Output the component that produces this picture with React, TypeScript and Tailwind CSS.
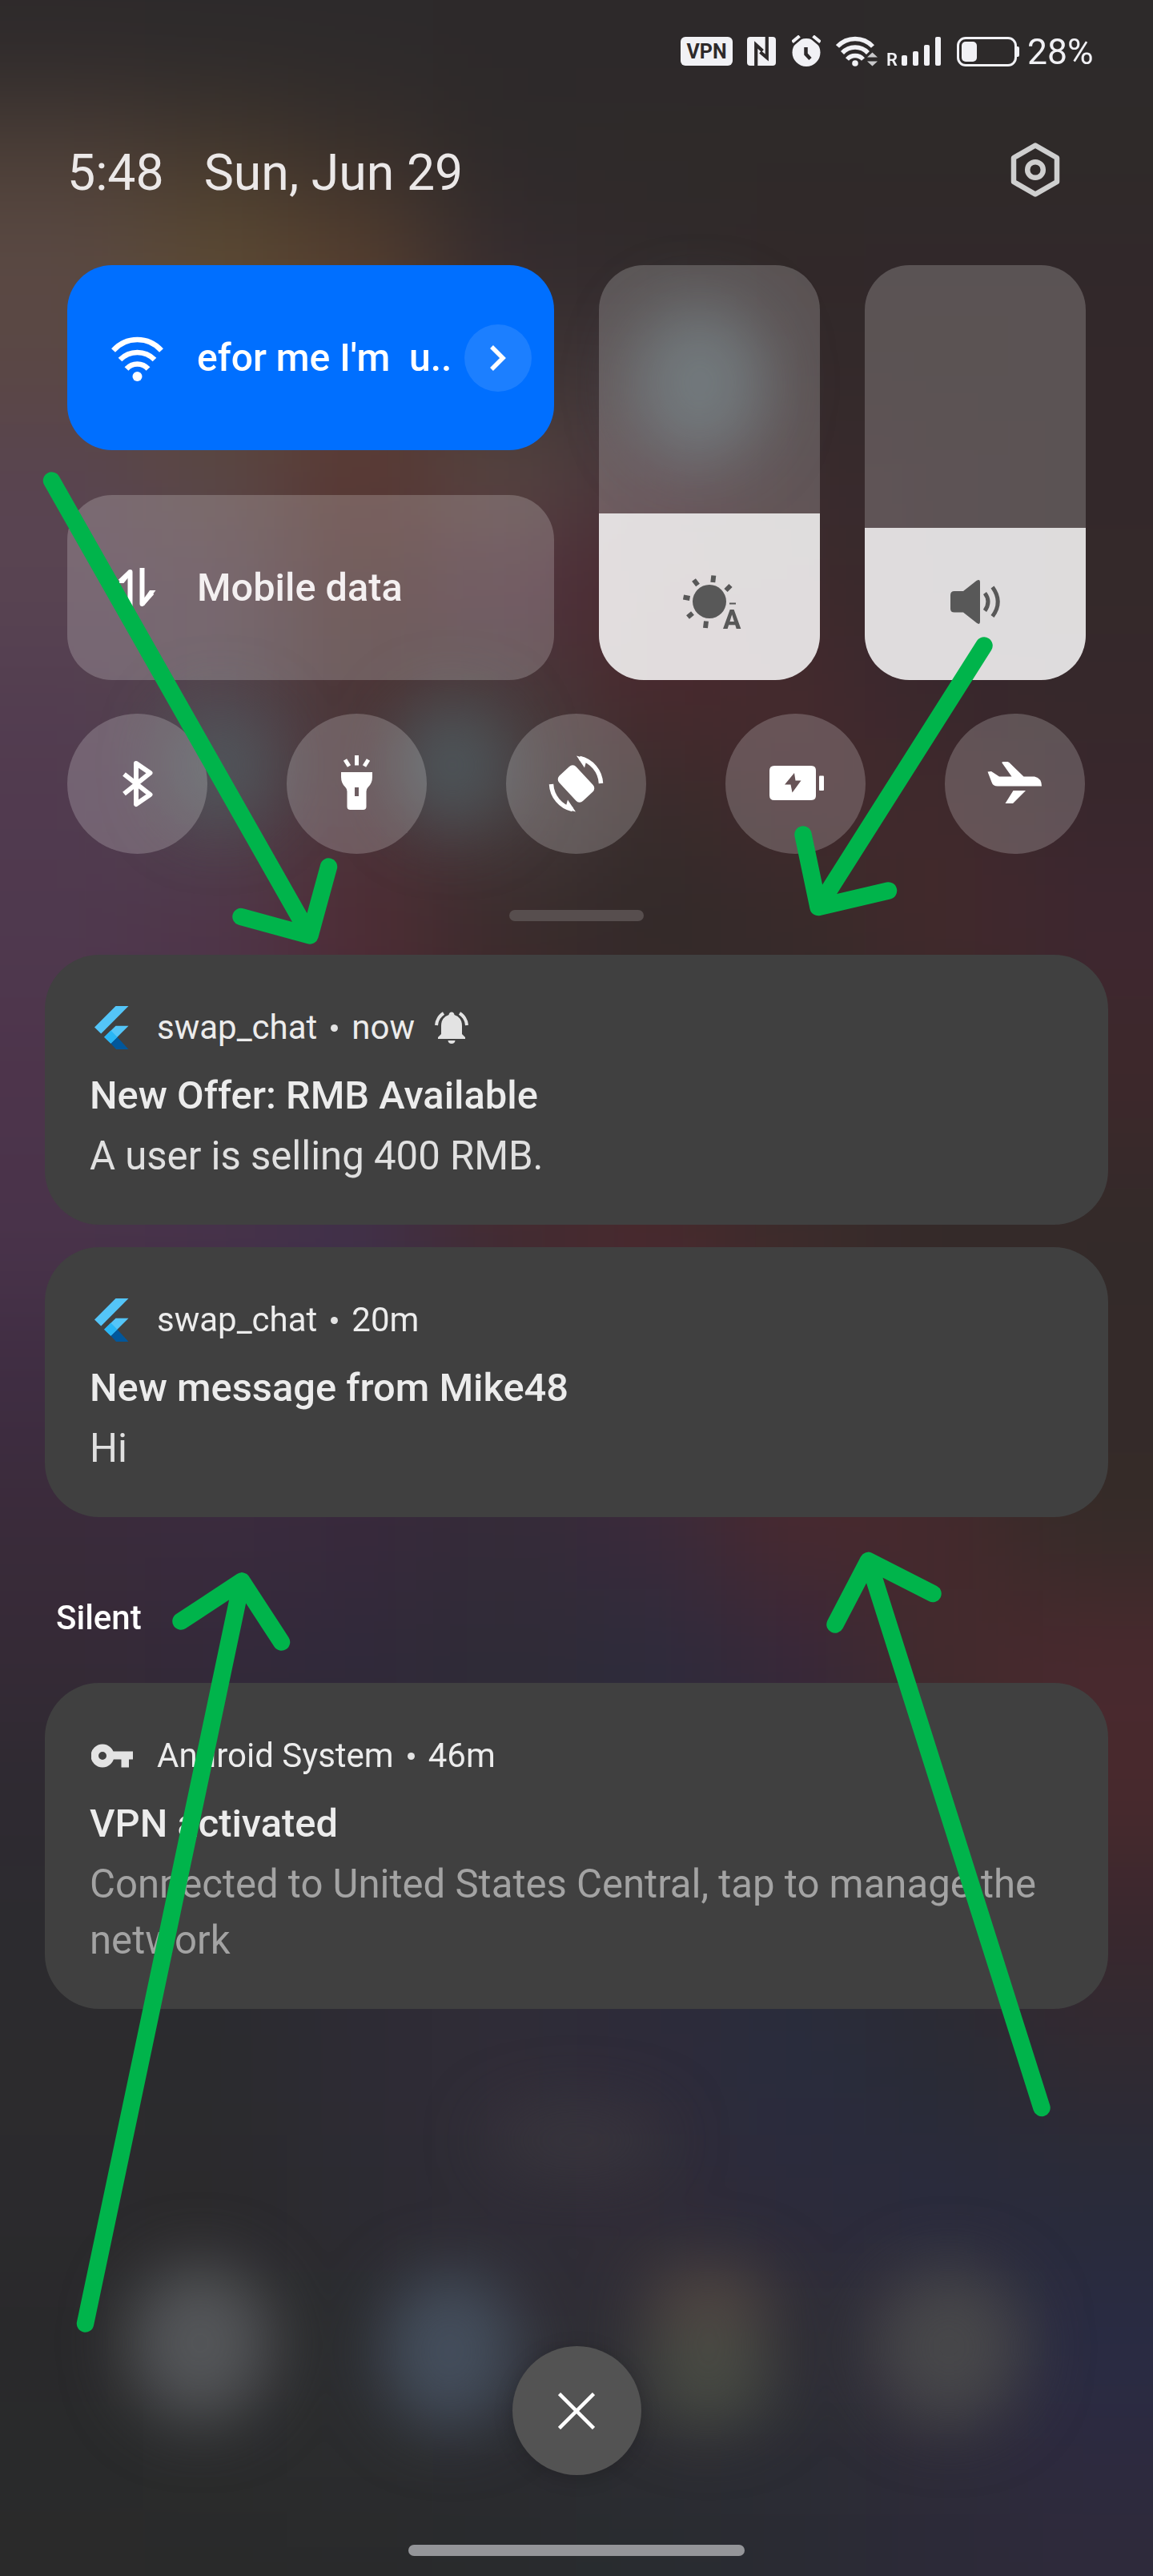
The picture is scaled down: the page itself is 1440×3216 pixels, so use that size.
import type { ReactNode } from "react";

/* Wallpaper colours, eight columns per row; each row is centred on its y value. */
const MESH: { y: number; c: string[] }[] = [
  { y: 60, c: ["#2e2a2b", "#2d2a2b", "#2d2a2b", "#2d292a", "#2d292a", "#2d292a", "#2d2a2a", "#2d2a2a"] },
  { y: 200, c: ["#4d3f37", "#46392e", "#3a302b", "#2e2a2a", "#2f2a29", "#2f2a29", "#2f2a29", "#2f2a29"] },
  { y: 320, c: ["#5b4a44", "#5e4c33", "#563f2e", "#352b2e", "#302a2b", "#312829", "#31282a", "#31282a"] },
  { y: 460, c: ["#5a4744", "#584538", "#573c35", "#3f3335", "#3a3233", "#33292a", "#332829", "#33282a"] },
  { y: 590, c: ["#594450", "#5a4845", "#5a3833", "#584842", "#45333a", "#3a2c2e", "#35292b", "#33282a"] },
  { y: 730, c: ["#594452", "#58424c", "#4f3432", "#523240", "#49292e", "#3d2a2c", "#36282c", "#34292a"] },
  { y: 860, c: ["#533e50", "#51444c", "#4b3536", "#463a3a", "#4a292e", "#452a2e", "#38272c", "#36282b"] },
  { y: 990, c: ["#513a4f", "#50464e", "#4a3338", "#483e40", "#382c2b", "#42292c", "#40292c", "#38272c"] },
  { y: 1150, c: ["#4f394e", "#4f3549", "#4f2c34", "#392b2b", "#322a29", "#372a2a", "#42292b", "#3e2730"] },
  { y: 1340, c: ["#4d344b", "#4a3249", "#452d3a", "#472a2f", "#3c2a2b", "#342a29", "#352a29", "#3d282b"] },
  { y: 1540, c: ["#49334a", "#46324a", "#40304a", "#432b30", "#49292d", "#3b2b2b", "#332a29", "#332a29"] },
  { y: 1720, c: ["#3f2d42", "#3f2d45", "#3a2d42", "#3a293c", "#442935", "#49292d", "#3c2a2a", "#342a29"] },
  { y: 1910, c: ["#3a2b3a", "#3a2b3e", "#38293b", "#342b38", "#3a2a3b", "#48292f", "#45292d", "#352b28"] },
  { y: 2060, c: ["#352a36", "#34293a", "#30293a", "#2f2b36", "#2e2b3b", "#38283a", "#432a2c", "#49292e"] },
  { y: 2240, c: ["#2e2a31", "#2e2a35", "#2d2b36", "#2d2b38", "#2c2b3a", "#2f2a38", "#3a292f", "#48292d"] },
  { y: 2420, c: ["#2c2b2f", "#2c2b30", "#2d2b35", "#2e2b38", "#2b2b3a", "#2a2b38", "#2d2a33", "#38282e"] },
  { y: 2580, c: ["#2c2b2d", "#2b2b2e", "#2d2b34", "#302c37", "#2e2b39", "#292c3e", "#292b35", "#2f2a32"] },
  { y: 2750, c: ["#2b2a2d", "#2b2a2c", "#2c2b32", "#2f2c36", "#302c37", "#2c2a3b", "#2a2b3d", "#292b3a"] },
  { y: 2920, c: ["#29292b", "#2b2b2c", "#2b2c2f", "#2f2e35", "#2f2e35", "#2f2e35", "#302d39", "#292b43"] },
  { y: 3080, c: ["#292a2b", "#2a2b2c", "#2b2c2e", "#2a2b2f", "#2c2c31", "#2b2c34", "#2d2b38", "#2d2a3f"] },
  { y: 3190, c: ["#2a2a2a", "#292a2a", "#292a2b", "#292b2d", "#282c30", "#2a2b33", "#2c2a38", "#2e2a3a"] },
];

const GLOWS = [
  { x: 874, y: 478, rx: 85, ry: 98, c: "#57656b", o: 0.75 },
  { x: 275, y: 955, rx: 66, ry: 74, c: "#50585d", o: 0.85 },
  { x: 565, y: 955, rx: 72, ry: 80, c: "#4e585c", o: 0.9 },
  { x: 720, y: 2672, rx: 110, ry: 40, c: "#3d3a40", o: 0.7 },
  { x: 250, y: 2925, rx: 90, ry: 98, c: "#56595c", o: 0.95 },
  { x: 562, y: 2935, rx: 84, ry: 98, c: "#46505f", o: 0.95 },
  { x: 885, y: 2878, rx: 82, ry: 52, c: "#524743", o: 0.9 },
  { x: 885, y: 2965, rx: 82, ry: 66, c: "#4a4e45", o: 0.9 },
  { x: 1185, y: 2930, rx: 94, ry: 98, c: "#49494b", o: 0.95 },
];

function Wallpaper() {
  return (
    <svg className="absolute inset-0 h-[3216px] w-[1440px]" viewBox="0 0 1440 3216" aria-hidden="true">
      <defs>
        <filter id="mesh" filterUnits="userSpaceOnUse" x="-300" y="-300" width="2040" height="3816" colorInterpolationFilters="sRGB">
          <feGaussianBlur stdDeviation="66" />
        </filter>
        <filter id="glow" filterUnits="userSpaceOnUse" x="-300" y="0" width="2040" height="3516" colorInterpolationFilters="sRGB">
          <feGaussianBlur stdDeviation="40" />
        </filter>
      </defs>
      <g filter="url(#mesh)">
        {MESH.map((row, r) => {
          const top = r === 0 ? -300 : (MESH[r - 1].y + row.y) / 2;
          const bottom = r === MESH.length - 1 ? 3516 : (MESH[r + 1].y + row.y) / 2;
          return row.c.map((fill, i) => {
            const x = i === 0 ? -300 : i * 180;
            const right = i === 7 ? 1740 : (i + 1) * 180;
            return <rect key={`${r}-${i}`} x={x} y={top} width={right - x + 1} height={bottom - top + 1} fill={fill} />;
          });
        })}
      </g>
      <g filter="url(#glow)">
        {GLOWS.map((g) => (
          <ellipse key={`${g.x}-${g.y}`} cx={g.x} cy={g.y} rx={g.rx} ry={g.ry} fill={g.c} opacity={g.o} />
        ))}
      </g>
    </svg>
  );
}

function StatusBar() {
  return (
    <div className="flex h-[128px] items-center pl-[850px] text-[#f1f1f5]">
      <div className="flex h-9 w-[65px] items-center justify-center rounded-[6px] bg-[#f1f1f5] text-[25px] leading-none font-bold text-[#2d292a]">
        VPN
      </div>
      <svg className="ml-[18px] h-9 w-9" viewBox="0 0 36 36">
        <rect width="36" height="36" rx="4" fill="currentColor" />
        <path d="M11.200 36V10L19.500 17.500M24.800 0V26L16.500 19" fill="none" stroke="#2d292a" strokeWidth="4.200" strokeMiterlimit="6" />
      </svg>
      <svg className="ml-5 h-10 w-9" viewBox="0 0 36 40">
        <circle cx="18" cy="21.500" r="17.500" fill="currentColor" />
        <path d="M0.500 9.500L10 1.500M35.500 9.500L26 1.500" stroke="#2d292a" strokeWidth="8" />
        <path d="M0.500 8.500L9.500 1M35.500 8.500L26.500 1" stroke="currentColor" strokeWidth="4" />
        <path d="M17.500 15V23.500L23 29.500" fill="none" stroke="#2d292a" strokeWidth="4.500" />
      </svg>
      <svg className="ml-[19px] h-10 w-[52px]" viewBox="0 0 52 40">
        <g fill="none" stroke="currentColor" strokeWidth="5.500">
          <path d="M2 14A30 30 0 0 1 46 14" />
          <path d="M8 22A22 22 0 0 1 40 22" />
          <path d="M14 30A13.500 13.500 0 0 1 34 30" />
        </g>
        <circle cx="24" cy="35" r="3.800" fill="currentColor" />
        <path d="M39 27.500L45.500 21.500L52 27.500ZM39 32.500H52L45.500 38.500Z" fill="#c9c9cb" />
      </svg>
      <span className="mt-[22px] ml-[11px] w-[15px] text-[22px] leading-none font-semibold">R</span>
      <div className="ml-1 flex h-9 items-end gap-[7px]">
        <i className="h-[13px] w-[7px] rounded-[2px] bg-[#f1f1f5]" />
        <i className="h-[18px] w-[7px] rounded-[2px] bg-[#f1f1f5]" />
        <i className="h-[26px] w-[7px] rounded-[2px] bg-[#f1f1f5]" />
        <i className="h-9 w-[7px] rounded-[2px] bg-[#f1f1f5]" />
      </div>
      <div className="ml-[20px] h-[37px] w-[75px] rounded-[11px] border-[3px] border-[#f1f1f5] p-[3px]">
        <div className="h-full w-[19px] rounded-[5px] bg-[#f1f1f5]" />
      </div>
      <div className="h-[13px] w-[3px] rounded-r-[2px] bg-[#f1f1f5]" />
      <span className="ml-[10px] pt-[2px] text-[44.500px] leading-none">28%</span>
    </div>
  );
}

function RoundTile({ children }: { children: ReactNode }) {
  return (
    <div className="size-[175px] rounded-full bg-white/20 text-white">
      <svg className="size-full" viewBox="0 0 175 175">
        {children}
      </svg>
    </div>
  );
}

function QuickSettings() {
  return (
    <section className="px-[84px]">
      <div className="flex justify-between">
        <div className="flex w-[608px] flex-col gap-14">
          <div className="flex h-[231px] items-center rounded-[56px] bg-[#006fff] text-white">
            <svg className="ml-[54px] h-[60px] w-[68px]" viewBox="0 0 68 60">
              <g fill="none" stroke="currentColor" strokeWidth="6.500">
                <path d="M3.500 20.500A40 40 0 0 1 63.500 20.500" />
                <path d="M12 32A30 30 0 0 1 55 32" />
                <path d="M20 43.500A18 18 0 0 1 47 43.500" />
              </g>
              <circle cx="33.500" cy="53" r="6" fill="currentColor" />
            </svg>
            <span className="ml-[40px] w-[334px] text-[48px] leading-[60px] font-medium whitespace-pre">efor me I'm  u..</span>
            <div className="flex size-[84px] items-center justify-center rounded-full bg-[#1c7fff]">
              <svg className="h-[34px] w-[22px]" viewBox="0 0 22 34">
                <path d="M3 3L17 17L3 31" fill="none" stroke="currentColor" strokeWidth="5.500" />
              </svg>
            </div>
          </div>
          <div className="flex h-[231px] items-center rounded-[56px] bg-white/20 text-[#f4f0f1]">
            <svg className="ml-[62px] h-[52px] w-[50px]" viewBox="0 0 50 52">
              <path d="M16.500 51V6L4 18M31.500 1V46L44 32" fill="none" stroke="white" strokeWidth="6" strokeLinejoin="round" />
              <path d="M1.500 20L15 3.500V12L8.500 20ZM48.500 29L34 48V39L41 29Z" fill="white" />
            </svg>
            <span className="ml-[50px] text-[48.700px] leading-[60px] font-medium">Mobile data</span>
          </div>
        </div>
        <div className="flex gap-14">
          <div className="flex h-[518px] w-[276px] flex-col justify-end overflow-hidden rounded-[56px] bg-white/20">
            <div className="h-[208px] bg-white/80">
              <svg className="h-[208px] w-[276px]" viewBox="0 0 276 208">
                <circle cx="138" cy="110" r="21" fill="#585858" />
                <g stroke="#585858" strokeWidth="6">
                  <path d="M142.300 86L143.300 77.500M123.500 89.500L118.500 83M158.500 96L164.500 90M113.500 106L105.500 104.500M117 124.500L111 129.500M134 134.500L133 143" />
                  <path d="M163 112.500H171" strokeWidth="2" />
                </g>
                <text x="155" y="144" fontFamily="Roboto, sans-serif" fontWeight="800" fontSize="33" fill="#585858">
                  A
                </text>
              </svg>
            </div>
          </div>
          <div className="flex h-[518px] w-[276px] flex-col justify-end overflow-hidden rounded-[56px] bg-white/20">
            <div className="h-[190px] bg-white/80">
              <svg className="h-[190px] w-[276px]" viewBox="0 0 276 190">
                <path d="M107 84Q107 79 112 79H123L139.500 66Q144 63 144 68V117Q144 122 139.500 118.500L123 105.500H112Q107 105.500 107 101Z" fill="#585858" />
                <path d="M150 81.500Q158 92 150 103.500M159.500 74Q173 92.500 159.500 110.500" fill="none" stroke="#585858" strokeWidth="5" />
              </svg>
            </div>
          </div>
        </div>
      </div>
      <div className="mt-[42px] flex justify-between pr-px">
        <RoundTile>
          <path d="M71 75.500L103.500 101L86 113V62L103.500 74L71 100" fill="none" stroke="currentColor" strokeWidth="6" strokeLinejoin="round" />
        </RoundTile>
        <RoundTile>
          <path d="M87.500 52V64.500M73 57.500L78 65.500M102 57.500L97 65.500" stroke="currentColor" strokeWidth="5" />
          <path
            fillRule="evenodd"
            d="M68 73H107V79Q107 87 101.500 92Q99.500 94 99.500 97V116Q99.500 120 95.500 120H79.500Q75.500 120 75.500 116V97Q75.500 94 73.500 92Q68 87 68 79ZM85 92V103H90V92Z"
            fill="currentColor"
          />
        </RoundTile>
        <RoundTile>
          <rect x="73" y="66" width="29" height="43" rx="6" transform="rotate(-43 87.500 87.500)" fill="currentColor" />
          <path d="M92 55.500A34 34 0 0 1 118.500 87M83 119.500A34 34 0 0 1 56.500 88" fill="none" stroke="currentColor" strokeWidth="5.500" />
          <path d="M88 52.500L98 67.500L101 56.500ZM87 122.500L77 107.500L74 118.500Z" fill="currentColor" />
        </RoundTile>
        <RoundTile>
          <path
            fillRule="evenodd"
            d="M61 65H107Q113 65 113 71V102Q113 108 107 108H61Q55 108 55 102V71Q55 65 61 65ZM86 74L74 88.500H81.500L83.500 98.500L94.500 83.500H87.500Z"
            fill="currentColor"
          />
          <rect x="117" y="77.500" width="6" height="18.500" rx="1" fill="currentColor" />
        </RoundTile>
        <RoundTile>
          <path
            d="M71.500 61.500Q71 60 73 60H78.500L80.500 61L98.500 78.500H112Q121 80.500 121 90.500H66Q60 90.500 58.500 85.500L53.500 72.500L58 72L68 78.500H83.500ZM85.500 96H101L85 112H75.500Z"
            fill="currentColor"
          />
        </RoundTile>
      </div>
    </section>
  );
}

function FlutterLogo() {
  return (
    <svg className="ml-[6px] h-[54px] w-[43px]" viewBox="0 0 43 54">
      <path d="M0 26.500L26.500 0H42.500L8.200 34.500Z" fill="#54c5f8" />
      <path d="M26.500 24.800H42.500L20.400 46.800L12.200 38.700Z" fill="#54c5f8" />
      <path d="M20.400 46.800L28.500 38.700L42.500 54H27Z" fill="#01579b" />
      <path d="M12.200 38.700L20.400 30.600L28.500 38.700L20.400 46.800Z" fill="#29b6f6" />
    </svg>
  );
}

function KeyIcon() {
  return (
    <svg className="ml-[2px] h-[30px] w-[52px]" viewBox="0 0 52 30">
      <path
        fillRule="evenodd"
        d="M14 0.500A14.300 14.300 0 1 1 14 29.500A14.300 14.300 0 0 1 14 0.500ZM14 10A5 5 0 1 0 14 20A5 5 0 0 0 14 10Z"
        fill="#e3e3e3"
      />
      <path d="M24 9.500H52V19.500H47V29.500H37.500V19.500H24Z" fill="#e3e3e3" />
    </svg>
  );
}

function BellIcon() {
  return (
    <svg className="ml-[25px] h-[40px] w-[42px]" viewBox="0 0 42 40">
      <path d="M21 0.500Q24 0.500 24.500 4Q34 7 34 18V28L38 32V34H4V32L8 28V18Q8 7 17.500 4Q18 0.500 21 0.500Z" fill="#e3e3e3" />
      <path d="M16.500 36H25.500Q25 40 21 40Q17 40 16.500 36Z" fill="#e3e3e3" />
      <path d="M11 2Q3 7 2 17M31 2Q39 7 40 17" fill="none" stroke="#e3e3e3" strokeWidth="4" />
    </svg>
  );
}

type NoticeProps = { icon: ReactNode; app: string; time: string; alert?: boolean; title: string; body: string; dim?: boolean };

function Notice({ icon, app, time, alert, title, body, dim }: NoticeProps) {
  return (
    <article className="rounded-[68px] bg-[#404040] px-14 pt-[63px] pb-[51px] text-[#ececec]">
      <div className="flex h-14 items-center text-[42px] leading-[56px]">
        <div className="flex w-[84px] items-center">{icon}</div>
        <span>{app}</span>
        <i className="mx-[17px] size-[9px] rounded-full bg-[#e3e3e3]" />
        <span>{time}</span>
        {alert && <BellIcon />}
      </div>
      <h2 className="mt-[27px] text-[48.800px] leading-[60px] font-medium">{title}</h2>
      <p className={dim ? "mt-[10px] text-[49.100px] leading-[70px] text-[#a3a3a3]" : "mt-[10px] text-[49.100px] leading-[70px] text-[#e0e0e0]"}>{body}</p>
    </article>
  );
}

function Arrows() {
  return (
    <svg className="pointer-events-none absolute inset-0 h-[3216px] w-[1440px]" viewBox="0 0 1440 3216" aria-hidden="true">
      <g fill="none" stroke="#00b44b" strokeWidth="21.500" strokeLinecap="round" strokeLinejoin="round">
        <path d="M64.500 600L387 1168M301 1144.500L387 1168L410.500 1082" />
        <path d="M1229 806L1022 1132.500M1003 1042L1022 1132.500L1109.500 1112" />
        <path d="M106.500 2901L302 1974M226 2024L302 1974L351.500 2050" />
        <path d="M1301 2631.500L1084.500 1948.500M1043 2028L1084.500 1948.500L1165 1989.500" />
      </g>
    </svg>
  );
}

export default function App() {
  return (
    <div className="relative h-[3216px] w-[1440px] overflow-hidden bg-[#2d2a2b] font-['Roboto',sans-serif]">
      <Wallpaper />
      <div className="relative flex h-full flex-col">
        <StatusBar />
        <header className="flex h-[203px] items-start justify-between pt-[46px] pr-[116px] pl-[84px] text-[#ebe8e8]">
          <div className="flex gap-[50px] text-[62.600px] leading-[84px]">
            <span>5:48</span>
            <span>Sun, Jun 29</span>
          </div>
          <svg className="mt-1 h-[68px] w-[62px]" viewBox="0 0 62 68">
            <path d="M31 3.500L58 19V49L31 64.500L4 49V19Z" fill="none" stroke="#cfcfcf" strokeWidth="6.500" strokeLinejoin="round" />
            <circle cx="31" cy="34" r="9.800" fill="none" stroke="#cfcfcf" strokeWidth="6.500" />
          </svg>
        </header>
        <QuickSettings />
        <div className="mt-[70px] h-[14px] w-[168px] self-center rounded-full bg-[#574e4e]" />
        <main className="mt-[42px] flex flex-col gap-[28px] px-14">
          <Notice icon={<FlutterLogo />} app="swap_chat" time="now" alert title="New Offer: RMB Available" body="A user is selling 400 RMB." />
          <Notice icon={<FlutterLogo />} app="swap_chat" time="20m" title="New message from Mike48" body="Hi" />
        </main>
        <h3 className="mt-[100px] pl-[70px] text-[42px] leading-[52px] font-medium text-white">Silent</h3>
        <section className="mt-[55px] px-14">
          <Notice icon={<KeyIcon />} app="Android System" time="46m" title="VPN activated" body="Connected to United States Central, tap to manage the network" dim />
        </section>
        <button className="mt-[421px] flex size-[161px] items-center justify-center self-center rounded-full bg-[#535353] shadow-[0_4px_24px_rgba(0,0,0,0.18)]">
          <svg className="size-[46px]" viewBox="0 0 46 46">
            <path d="M1.500 1.500L44.500 44.500M44.500 1.500L1.500 44.500" stroke="white" strokeWidth="4.500" />
          </svg>
        </button>
        <div className="mt-[87px] h-[14px] w-[420px] self-center rounded-full bg-[#949599]" />
      </div>
      <Arrows />
    </div>
  );
}
